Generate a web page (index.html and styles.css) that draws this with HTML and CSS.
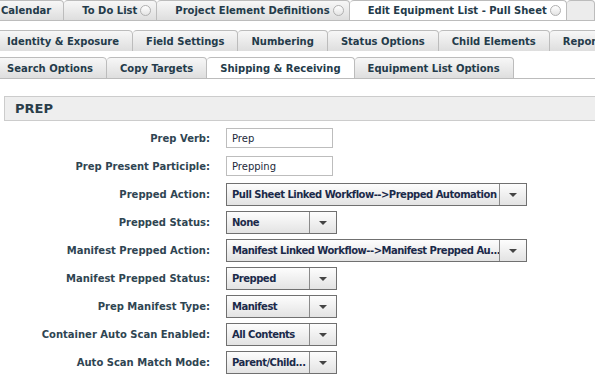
FILE: index.html
```html
<!DOCTYPE html>
<html lang="en">
<head>
  <meta charset="UTF-8" />
  <title>Edit Equipment List - Pull Sheet</title>
  <link rel="stylesheet" href="styles.css">
</head>
<body>

<div class="doc-tabs">
  <div class="tab first">Calendar</div>
  <div class="tab">To Do List <span class="close"></span></div>
  <div class="tab">Project Element Definitions <span class="close"></span></div>
  <div class="tab active">Edit Equipment List - Pull Sheet <span class="close"></span></div>
  <div class="tab filler"></div>
</div>

<div class="sub-tabs row-a">
  <div class="tab">Identity &amp; Exposure</div>
  <div class="tab">Field Settings</div>
  <div class="tab">Numbering</div>
  <div class="tab">Status Options</div>
  <div class="tab">Child Elements</div>
  <div class="tab">Repor</div>
</div>

<div class="sub-tabs row-b">
  <div class="tab">Search Options</div>
  <div class="tab">Copy Targets</div>
  <div class="tab active">Shipping &amp; Receiving</div>
  <div class="tab">Equipment List Options</div>
</div>

<div class="section">
  <div class="section-head">PREP</div>

  <div class="form">
    <label>Prep Verb:</label>
    <div><input class="text" type="text" value="Prep"></div>

    <label>Prep Present Participle:</label>
    <div><input class="text" type="text" value="Prepping"></div>

    <label>Prepped Action:</label>
    <div class="select wide"><span class="value">Pull Sheet Linked Workflow-->Prepped Automation</span><span class="arrow"></span></div>

    <label>Prepped Status:</label>
    <div class="select"><span class="value">None</span><span class="arrow"></span></div>

    <label>Manifest Prepped Action:</label>
    <div class="select wide"><span class="value">Manifest Linked Workflow-->Manifest Prepped Au...</span><span class="arrow"></span></div>

    <label>Manifest Prepped Status:</label>
    <div class="select"><span class="value">Prepped</span><span class="arrow"></span></div>

    <label>Prep Manifest Type:</label>
    <div class="select"><span class="value">Manifest</span><span class="arrow"></span></div>

    <label>Container Auto Scan Enabled:</label>
    <div class="select"><span class="value">All Contents</span><span class="arrow"></span></div>

    <label>Auto Scan Match Mode:</label>
    <div class="select"><span class="value">Parent/Child...</span><span class="arrow"></span></div>
  </div>
</div>

</body>
</html>
```

FILE: styles.css
```css
body {
  margin: 0;
  width: 595px;
  height: 377px;
  overflow: hidden;
  background-color: #fff;
  font-family: 'DejaVu Sans', Verdana, sans-serif;
  font-size: 10px;
  color: #243b4a;
}
.doc-tabs,
.sub-tabs {
  display: flex;
  white-space: nowrap;
  overflow: hidden;
  border-bottom: 1px solid #bcbcbc;
}
.doc-tabs {
  height: 20px;
  margin-left: -17px;
}
.sub-tabs {
  height: 22px;
  align-items: flex-end;
}
.row-a {
  margin-top: 8px;
  border-bottom: none;
}
.row-b {
  margin-top: 5px;
}
.tab {
  display: flex;
  align-items: center;
  flex-shrink: 0;
  box-sizing: border-box;
  height: 22px;
  margin-bottom: -1px;
  padding: 0 13px;
  font-weight: bold;
  color: #243b4a;
  background: linear-gradient(#f7f7f7, #dedede);
  border: 1px solid #bcbcbc;
  border-left: none;
  border-radius: 4px 4px 0 0;
}
.sub-tabs .tab:first-child {
  border-left: 1px solid #bcbcbc;
  margin-left: -7px;
  padding-left: 13px;
}
.doc-tabs .tab {
  height: 21px;
  padding: 0 5px 0 18px;
}
.doc-tabs .tab.first {
  padding-right: 12px;
}
.tab.active {
  background: #fff;
  border-bottom-color: #fff;
}
.tab.filler {
  flex: 1;
  background: #ececec;
}
.close {
  display: inline-block;
  width: 9px;
  height: 9px;
  margin-left: 3px;
  border: 1px solid #b0b0b0;
  border-radius: 50%;
  background: linear-gradient(#fff, #e4e4e4);
}
.section {
  margin: 17px 0 0 4px;
}
.section-head {
  height: 23px;
  line-height: 23px;
  padding-left: 10px;
  font-size: 13px;
  font-weight: bold;
  color: #2a3d4a;
  background-color: #eeeeee;
  border: 1px solid #cccccc;
  border-right: none;
}
.form {
  display: grid;
  grid-template-columns: 206px auto;
  grid-auto-rows: 28px;
  column-gap: 16px;
  align-items: center;
  justify-items: start;
  margin-top: 3px;
}
.form label {
  justify-self: end;
  font-weight: bold;
  color: #2f4552;
}
.text {
  box-sizing: border-box;
  width: 107px;
  height: 20px;
  padding: 0 5px;
  font-family: inherit;
  font-size: 10px;
  color: #1c2a3a;
  border: 1px solid #bdbdbd;
  outline: none;
}
.select {
  display: flex;
  box-sizing: border-box;
  width: 111px;
  height: 23px;
  border: 1px solid #707070;
  background: linear-gradient(#fdfdfd, #e3e3e3);
  font-weight: bold;
  color: #1b2a4a;
}
.select.wide {
  width: 301px;
}
.select .value {
  flex: 1;
  padding: 0 0 0 5px;
  line-height: 21px;
  letter-spacing: -0.5px;
  overflow: hidden;
  white-space: nowrap;
}
.select .arrow {
  position: relative;
  width: 26px;
  border-left: 1px solid #8a8a8a;
}
.select .arrow::after {
  content: "";
  position: absolute;
  left: 9px;
  top: 9px;
  border-left: 4px solid transparent;
  border-right: 4px solid transparent;
  border-top: 4px solid #444;
}
```
